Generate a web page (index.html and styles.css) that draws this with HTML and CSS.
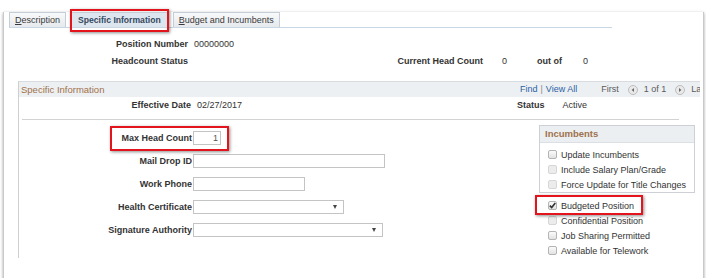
FILE: index.html
```html
<!DOCTYPE html>
<html lang="en">
<head>
    <meta charset="UTF-8">
    <meta name="viewport" content="width=device-width, initial-scale=1.0">
    <title>Position Data - Specific Information</title>
    <link rel="stylesheet" href="styles.css">
</head>
<body>
    <div class="page">
        <div class="tabs">
            <a class="tab" href="#"><u>D</u>escription</a>
            <a class="tab tab-active mark-tab" href="#">Specific Information</a>
            <a class="tab" href="#"><u>B</u>udget and Incumbents</a>
        </div>

        <div class="summary">
            <div class="sum-row">
                <span class="sum-label">Position Number</span>
                <span class="sum-value">00000000</span>
            </div>
            <div class="sum-row">
                <span class="sum-label">Headcount Status</span>
                <span class="hc-label">Current Head Count</span>
                <span class="hc-value">0</span>
                <span class="hc-outof">out of</span>
                <span class="hc-max">0</span>
            </div>
        </div>

        <div class="section">
            <div class="sec-head">
                <span class="sec-title">Specific Information</span>
                <span class="sec-nav">
                    <a href="#">Find</a><span class="pipe">|</span><a href="#">View All</a>
                    <span class="first">First</span>
                    <svg class="nav-ico" width="10" height="10" viewBox="0 0 10 10"><circle cx="5" cy="5" r="4.5" fill="#e9e9e9" stroke="#bdbdbd"/><path d="M6 3 L3.6 5 L6 7 Z" fill="#6a6a6a"/></svg>
                    <span class="count">1 of 1</span>
                    <svg class="nav-ico" width="10" height="10" viewBox="0 0 10 10"><circle cx="5" cy="5" r="4.5" fill="#e9e9e9" stroke="#bdbdbd"/><path d="M4 3 L6.4 5 L4 7 Z" fill="#6a6a6a"/></svg>
                    <span class="last">Last</span>
                </span>
            </div>

            <div class="eff-row">
                <span class="eff-label">Effective Date</span>
                <span class="eff-value">02/27/2017</span>
                <span class="status-label">Status</span>
                <span class="status-value">Active</span>
            </div>
            <div class="rule"></div>

            <div class="sec-body">
                <div class="form">
                    <div class="form-row">
                        <label class="form-label"><span class="mark-field">Max Head Count</span></label>
                        <input class="field field-num" type="text" value="1">
                    </div>
                    <div class="form-row">
                        <label class="form-label">Mail Drop ID</label>
                        <input class="field field-mail" type="text">
                    </div>
                    <div class="form-row">
                        <label class="form-label">Work Phone</label>
                        <input class="field field-phone" type="text">
                    </div>
                    <div class="form-row">
                        <label class="form-label">Health Certificate</label>
                        <span class="field dropdown dd-health"><span class="caret"></span></span>
                    </div>
                    <div class="form-row">
                        <label class="form-label">Signature Authority</label>
                        <span class="field dropdown dd-sign"><span class="caret"></span></span>
                    </div>
                </div>

                <div class="side">
                    <div class="inc-box">
                        <div class="inc-head">Incumbents</div>
                        <div class="inc-list">
                            <div class="check-row"><span class="cb"></span>Update Incumbents</div>
                            <div class="check-row"><span class="cb cb-off"></span>Include Salary Plan/Grade</div>
                            <div class="check-row"><span class="cb cb-off"></span>Force Update for Title Changes</div>
                        </div>
                    </div>
                    <div class="flag-list">
                        <div class="check-row mark-check">
                            <span class="cb"><svg width="7" height="7" viewBox="0 0 7 7"><path d="M0.8 3.6 L2.7 5.6 L6.3 1" fill="none" stroke="#333" stroke-width="1.6"/></svg></span>Budgeted Position
                        </div>
                        <div class="check-row"><span class="cb cb-off"></span>Confidential Position</div>
                        <div class="check-row"><span class="cb"></span>Job Sharing Permitted</div>
                        <div class="check-row"><span class="cb"></span>Available for Telework</div>
                    </div>
                </div>
            </div>
        </div>
    </div>
</body>
</html>
```

FILE: styles.css
```css
html, body {
    margin: 0;
    overflow: hidden;
}
body {
    background-color: #fff;
    color: #333;
    font-family: "Liberation Sans", Arial, sans-serif;
    font-size: 9px;
}
a {
    color: inherit;
    text-decoration: none;
}

.page {
    margin-left: 3px;
    width: 701px;
    height: 276px;
    box-sizing: border-box;
    border: 1px solid #c9c9c9;
    border-top: none;
    box-shadow: 0 1px 3px rgba(0, 0, 0, 0.35);
}

/* tabs */
.tabs {
    display: flex;
    gap: 5px;
    margin: 12px 0 0 5px;
    width: 603px;
    height: 15px;
    border-bottom: 1px solid #c9d6e3;
}
.tab {
    height: 15px;
    line-height: 15px;
    padding: 0 5px;
    box-sizing: border-box;
    border: 1px solid #c5cdd6;
    border-bottom: none;
    background: linear-gradient(#f8f9fa, #e6e9ed);
    color: #3a3a3a;
}
.tab u {
    text-decoration: underline;
}
.tab-active {
    padding: 0 6px;
    background: #dde6ef;
    font-weight: bold;
    font-size: 8.6px;
    color: #34495e;
}
.mark-tab {
    position: relative;
}
.mark-tab::after {
    content: '';
    position: absolute;
    top: -4px;
    left: -2px;
    right: -2px;
    bottom: -5px;
    border: 2px solid #e3141c;
    box-shadow: 1px 1px 3px rgba(0, 0, 0, 0.45);
}

/* summary */
.summary {
    margin-top: 8px;
}
.sum-row {
    display: flex;
    height: 17px;
    line-height: 17px;
}
.sum-label, .hc-label, .eff-label, .status-label, .form-label {
    font-weight: bold;
    color: #333;
}
.sum-label {
    width: 184px;
    text-align: right;
}
.sum-value {
    margin-left: 6px;
}
.hc-label {
    width: 289px;
    margin-left: 6px;
    text-align: right;
}
.hc-value {
    margin-left: 19px;
}
.hc-outof {
    margin-left: 30px;
    font-weight: bold;
}
.hc-max {
    margin-left: 21px;
}

/* section */
.section {
    margin: 11px 3px 0 14px;
    border-left: 1px solid #cfcfcf;
}
.sec-head {
    display: flex;
    height: 15px;
    line-height: 15px;
    border-top: 1px solid #d8dce1;
    background-color: #edf0f3;
    white-space: nowrap;
    overflow: hidden;
}
.sec-title {
    flex: 0 0 auto;
    width: 499px;
    padding-left: 2px;
    font-size: 9.5px;
    color: #a0714a;
}
.sec-nav {
    display: flex;
    align-items: center;
    color: #5a5a5a;
}
.sec-nav a {
    color: #2a62a3;
}
.pipe {
    margin: 0 3px;
    color: #8a8a8a;
}
.first {
    margin-left: 24px;
}
.nav-ico {
    margin: 0 6px 0 9px;
}
.count {
    margin-right: 0;
}

.eff-row {
    display: flex;
    height: 16px;
    line-height: 16px;
}
.eff-label {
    width: 172px;
    text-align: right;
}
.eff-value {
    width: 320px;
    margin-left: 6px;
}
.status-value {
    margin-left: 18px;
}
.rule {
    width: 657px;
    margin: 6px 0 0 3px;
    border-top: 1px solid #d2d2d2;
}

.sec-body {
    display: flex;
}
.form {
    width: 520px;
    padding-top: 11px;
    display: flex;
    flex-direction: column;
    gap: 9px;
    padding-bottom: 20px;
}
.form-row {
    display: flex;
    align-items: center;
    height: 14px;
}
.form-label {
    width: 173px;
    text-align: right;
    margin-right: 1px;
}
.mark-field {
    position: relative;
}
.mark-field::after {
    content: '';
    position: absolute;
    top: -7px;
    left: -11px;
    right: -37px;
    bottom: -8px;
    border: 2px solid #e3141c;
    box-shadow: 1px 1px 3px rgba(0, 0, 0, 0.45);
}
.field {
    display: block;
    height: 14px;
    box-sizing: border-box;
    border: 1px solid #c4c4c4;
    background: #fff;
    margin: 0;
    padding: 0 2px;
    font-family: inherit;
    font-size: 9px;
    color: #555;
    outline: none;
}
.field-num {
    width: 28px;
    text-align: right;
}
.field-mail {
    width: 192px;
}
.field-phone {
    width: 112px;
}
.dropdown {
    position: relative;
}
.dd-health {
    width: 151px;
}
.dd-sign {
    width: 190px;
}
.caret {
    position: absolute;
    right: 6px;
    top: 4px;
    border-left: 2.5px solid transparent;
    border-right: 2.5px solid transparent;
    border-top: 4px solid #444;
}

/* incumbents */
.side {
    width: 156px;
    margin-top: 5px;
}
.inc-box {
    border: 1px solid #cdd1d5;
}
.inc-head {
    height: 16px;
    line-height: 16px;
    padding-left: 5px;
    background-color: #eceff2;
    border-bottom: 1px solid #dcdfe3;
    font-weight: bold;
    font-size: 9.5px;
    color: #a0714a;
}
.inc-list {
    padding: 4px 0 0 8px;
}
.flag-list {
    margin-top: 5px;
    padding-left: 9px;
}
.check-row {
    display: flex;
    align-items: center;
    width: fit-content;
    height: 15px;
    white-space: nowrap;
    color: #333;
}
.cb {
    display: flex;
    align-items: center;
    justify-content: center;
    width: 9px;
    height: 9px;
    box-sizing: border-box;
    margin-right: 4px;
    border: 1px solid #b4b4b4;
    border-radius: 2px;
    background: linear-gradient(#fbfbfb, #e2e2e2);
}
.cb-off {
    border-color: #d6d6d6;
    background: #ececec;
}
.mark-check {
    position: relative;
}
.mark-check::after {
    content: '';
    position: absolute;
    top: -3px;
    left: -13px;
    right: -9px;
    bottom: -2px;
    border: 2px solid #e3141c;
    box-shadow: 1px 1px 3px rgba(0, 0, 0, 0.45);
}
```
